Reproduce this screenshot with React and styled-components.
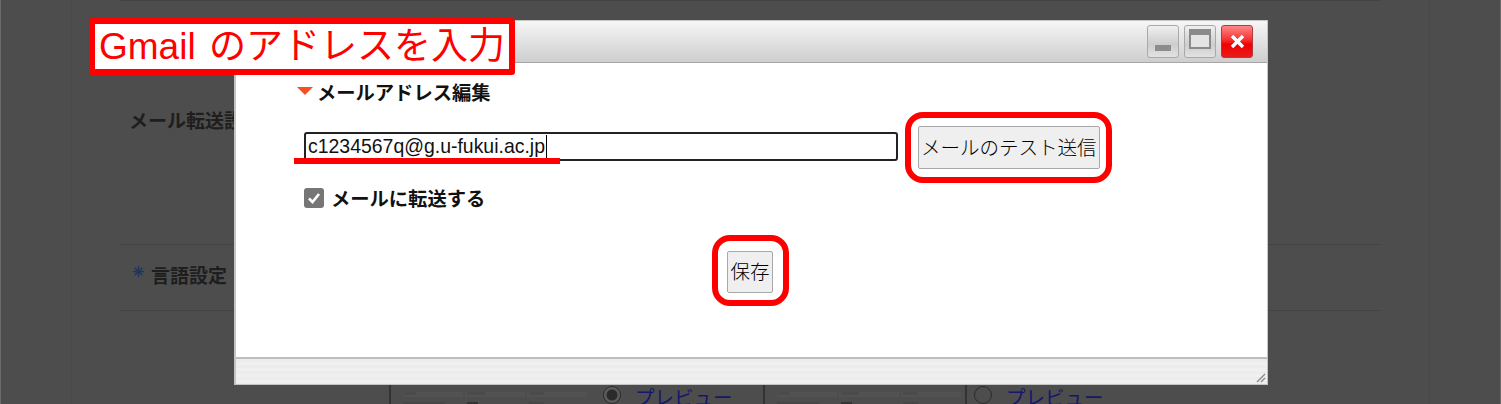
import React from 'react';
import styled, { createGlobalStyle } from 'styled-components';

const JP = `'Noto Sans CJK JP', 'Liberation Sans', sans-serif`;
const RED = '#ff0000';

const GlobalStyle = createGlobalStyle`
  html, body {
    margin: 0;
    padding: 0;
    background: #4d4d4d;
    overflow: hidden;
  }
`

const Page = styled.div`
  position: relative;
  width: 1501px;
  height: 404px;
  overflow: hidden;
  display: flex;
  justify-content: center;
  background: #4d4d4d;
  border-left: 1px solid #6a6a6a;
  border-right: 1px solid #6a6a6a;
  box-sizing: border-box;
  font-family: ${JP};
`
const Sheet = styled.div`
  width: 1359px;
  padding: 0 48px;
  box-sizing: border-box;
  border-left: 1px solid #494949;
  border-right: 1px solid #494949;
`
const Row = styled.div`
  display: flex;
  align-items: center;
  height: ${props => props.height}px;
  padding: ${props => props.pad || '0 0 0 9px'};
  border-top: 1px solid #434343;
  box-sizing: border-box;
`
const RowLabel = styled.div`
  display: flex;
  align-items: center;
  gap: 7px;
  font-size: 19px;
  font-weight: 700;
  line-height: 26px;
  color: #1e1e1e;
  white-space: nowrap;
`
const Asterisk = styled.svg`
  width: 11px;
  height: 11px;
  margin: 0 0 6px 4px;
`
const Previews = styled.div`
  display: flex;
  margin: 68px 0 0 269px;
`
const PreviewCard = styled.div`
  display: flex;
  width: ${props => props.width}px;
  height: 60px;
  padding: 5px 0 0 ${props => props.inset}px;
  box-sizing: border-box;
  border-left: 2px solid #333;
`
const Thumb = styled.div`
  display: grid;
  grid-template-columns: repeat(3, 60px);
  column-gap: 2px;
  row-gap: 3px;
  width: 184px;
  height: 14px;
  margin: 7px ${props => props.after || 0}px 0 0;
`
const ThumbCell = styled.div`
  height: ${props => props.height}px;
  padding-left: ${props => props.indent || 0}px;
  background: ${props => (props.head ? '#525252' : 'transparent')};
`
const ThumbText = styled.div`
  width: ${props => props.width}px;
  height: 3px;
  background: ${props => props.color};
`
const Radio = styled.span`
  display: inline-block;
  flex: none;
  width: 18px;
  height: 18px;
  margin-top: 1px;
  border: 1px solid #2b2b2b;
  border-radius: 50%;
  box-sizing: border-box;
  background: ${props => (props.checked ? 'radial-gradient(circle, #2b2b2b 0 5px, #5c5c5c 6px)' : 'transparent')};
`
const PreviewLink = styled.span`
  margin-left: ${props => props.gap}px;
  font-size: 19.5px;
  line-height: 24px;
  color: #16166b;
  white-space: nowrap;
`

const Dialog = styled.div`
  position: absolute;
  left: 233px;
  top: 20px;
  width: 1034px;
  height: 365px;
  display: flex;
  flex-direction: column;
  box-sizing: border-box;
  border: 1px solid #c4c4c4;
  border-left-width: 2px;
  background: #fff;
`
const TitleBar = styled.div`
  flex: none;
  height: 42px;
  display: flex;
  align-items: center;
  justify-content: flex-end;
  gap: 5px;
  padding: 0 14px 0 0;
  box-sizing: border-box;
  background: linear-gradient(#f6f6f6, #cecece);
  border-bottom: 1px solid #a6a6a6;
`
const WinButton = styled.div`
  width: 32px;
  height: 33px;
  display: flex;
  align-items: center;
  justify-content: center;
  box-sizing: border-box;
  border: 1px solid ${props => (props.danger ? '#b33a3a' : '#a9a9a9')};
  border-radius: 3px;
  background: ${props => (props.danger
    ? 'linear-gradient(#f88 0%, #f53030 45%, #f00000 60%, #e81c1c 100%)'
    : 'linear-gradient(#f0f0f0, #cdcdcd 60%, #e2e2e2)')};
`
const Body = styled.div`
  flex: 1;
  padding: 15px 0 0 62px;
  box-sizing: border-box;
  display: flex;
  flex-direction: column;
`
const Heading = styled.div`
  display: flex;
  align-items: center;
  gap: 4px;
  height: 28px;
  font-size: 19.3px;
  font-weight: 700;
  color: #111;
`
const Triangle = styled.span`
  width: 0;
  height: 0;
  margin: 0 0 2px -1px;
  border-left: 8px solid transparent;
  border-right: 8px solid transparent;
  border-top: 8px solid #f4511e;
`
const AddressRow = styled.div`
  display: flex;
  align-items: center;
  gap: 20px;
  margin: 17px 0 0 6px;
`
const Field = styled.div`
  position: relative;
  width: 594px;
  height: 29px;
  padding-left: 2px;
  display: flex;
  align-items: center;
  box-sizing: border-box;
  border: 2px solid #222;
  border-radius: 3px;
  font-family: 'Liberation Sans', sans-serif;
  font-size: 19.45px;
  color: #111;
  white-space: nowrap;
`
const Caret = styled.span`
  width: 1px;
  height: 23px;
  margin-left: 1px;
  background: #000;
`
const Underline = styled.span`
  position: absolute;
  left: -12px;
  top: 24px;
  width: 266px;
  height: 6px;
  background: ${RED};
`
const Ringed = styled.div`
  position: relative;
  margin-top: ${props => props.drop || 0}px;
  &::after {
    content: '';
    position: absolute;
    inset: ${props => props.inset};
    border: 6px solid ${RED};
    border-radius: 18px;
    pointer-events: none;
  }
`
const PlainButton = styled.button`
  display: block;
  height: ${props => props.height}px;
  padding: 0 ${props => props.pad}px 3px;
  box-sizing: border-box;
  border: 1px solid #a8a8a8;
  border-radius: 2px;
  background: #efefef;
  font-family: ${JP};
  font-size: 19.5px;
  font-weight: 300;
  color: #000;
  white-space: nowrap;
`
const CheckRow = styled.label`
  display: flex;
  align-items: center;
  gap: 7px;
  margin: 15px 0 0 6px;
  height: 28px;
  font-size: 19.3px;
  font-weight: 700;
  color: #111;
`
const CheckBox = styled.span`
  width: 20px;
  height: 20px;
  display: flex;
  align-items: center;
  justify-content: center;
  border-radius: 3px;
  background: #767676;
`
const SaveRow = styled.div`
  display: flex;
  justify-content: center;
  margin: 39px 0 0 -65px;
`
const StatusBar = styled.div`
  flex: none;
  position: relative;
  height: 27px;
  box-sizing: border-box;
  border-top: 2px solid #bdbdbd;
  background: repeating-linear-gradient(#ececec 0 3px, #f0f0f0 3px 6px);
`
const Grip = styled.svg`
  position: absolute;
  right: 1px;
  bottom: 1px;
  width: 12px;
  height: 12px;
`
const TitleNote = styled.div`
  position: absolute;
  left: 88px;
  top: 18px;
  width: 426px;
  height: 57px;
  padding-left: 4px;
  display: flex;
  align-items: center;
  box-sizing: border-box;
  border: 6px solid ${RED};
  border-radius: 3px;
  background: #fff;
  color: ${RED};
  font-family: 'Liberation Sans', 'Noto Sans CJK JP', sans-serif;
  font-size: 37px;
  line-height: 45px;
  word-spacing: 3px;
  white-space: nowrap;
`

const MinimizeIcon = () => (
  <svg width="16" height="8" viewBox="0 0 16 8" style={{ marginTop: 15 }}>
    <rect width="16" height="6" fill="#8c8c8c" />
  </svg>
)
const MaximizeIcon = () => (
  <svg width="22" height="20" viewBox="0 0 22 20" style={{ marginBottom: 5 }}>
    <rect x="1" y="1" width="20" height="18" fill="#e4e4e4" stroke="#8a8a8a" strokeWidth="2" />
    <rect x="1" y="1" width="20" height="5" fill="#8a8a8a" />
  </svg>
)
const CloseIcon = () => (
  <svg width="15" height="15" viewBox="0 0 15 15">
    <path d="M2 2 L13 13 M13 2 L2 13" stroke="#fff" strokeWidth="3.4" />
  </svg>
)

const ThumbTable = ({ after }) => (
  <Thumb after={after}>
    <ThumbCell head height={5} indent={1}><ThumbText width={12} color="#4b4b4b" /></ThumbCell>
    <ThumbCell head height={5} indent={2}><ThumbText width={18} color="#4b4b4b" /></ThumbCell>
    <ThumbCell head height={5} indent={2}><ThumbText width={15} color="#4b4b4b" /></ThumbCell>
    <ThumbCell height={3}><ThumbText width={42} color="#464646" /></ThumbCell>
    <ThumbCell height={3} indent={2}><ThumbText width={11} color="#343434" /></ThumbCell>
    <ThumbCell height={3} indent={2}><ThumbText width={15} color="#464646" /></ThumbCell>
  </Thumb>
)

const App = () => (
  <>
    <GlobalStyle />
    <Page>
      <Sheet>
        <Row height={244} pad="0 0 6px 9px">
          <RowLabel>メール転送設定</RowLabel>
        </Row>
        <Row height={66} pad="0 0 6px 9px">
          <RowLabel>
            <Asterisk viewBox="0 0 12 12">
              <path d="M6 0V12M0 6H12M1.8 1.8L10.2 10.2M10.2 1.8L1.8 10.2" stroke="#1f3560" strokeWidth="1.5" />
            </Asterisk>
            言語設定
          </RowLabel>
        </Row>
        <Row height={2} />
        <Previews>
          <PreviewCard width={374} inset={12}>
            <ThumbTable after={16} />
            <Radio checked />
            <PreviewLink gap={14}>プレビュー</PreviewLink>
          </PreviewCard>
          <PreviewCard width={202} inset={12}>
            <ThumbTable />
          </PreviewCard>
          <PreviewCard width={140} inset={7}>
            <Radio />
            <PreviewLink gap={14}>プレビュー</PreviewLink>
          </PreviewCard>
        </Previews>
      </Sheet>

      <Dialog>
        <TitleBar>
          <WinButton><MinimizeIcon /></WinButton>
          <WinButton><MaximizeIcon /></WinButton>
          <WinButton danger><CloseIcon /></WinButton>
        </TitleBar>
        <Body>
          <Heading>
            <Triangle />
            メールアドレス編集
          </Heading>
          <AddressRow>
            <Field>
              c1234567q@g.u-fukui.ac.jp
              <Caret />
              <Underline />
            </Field>
            <Ringed drop={3} inset="-14px -12px -14px -13px">
              <PlainButton height={43} pad={2}>メールのテスト送信</PlainButton>
            </Ringed>
          </AddressRow>
          <CheckRow>
            <CheckBox>
              <svg width="14" height="14" viewBox="0 0 14 14">
                <path d="M2 7.5 L5.5 11 L12 3" fill="none" stroke="#fff" strokeWidth="2.6" />
              </svg>
            </CheckBox>
            メールに転送する
          </CheckRow>
          <SaveRow>
            <Ringed inset="-16px -16px -13px -15px">
              <PlainButton height={42} pad={2}>保存</PlainButton>
            </Ringed>
          </SaveRow>
        </Body>
        <StatusBar>
          <Grip viewBox="0 0 12 12">
            <path d="M11 3L3 11M11 7L7 11" stroke="#8a8a8a" strokeWidth="1.4" />
          </Grip>
        </StatusBar>
      </Dialog>

      <TitleNote>Gmail のアドレスを入力</TitleNote>
    </Page>
  </>
)

export default App;
